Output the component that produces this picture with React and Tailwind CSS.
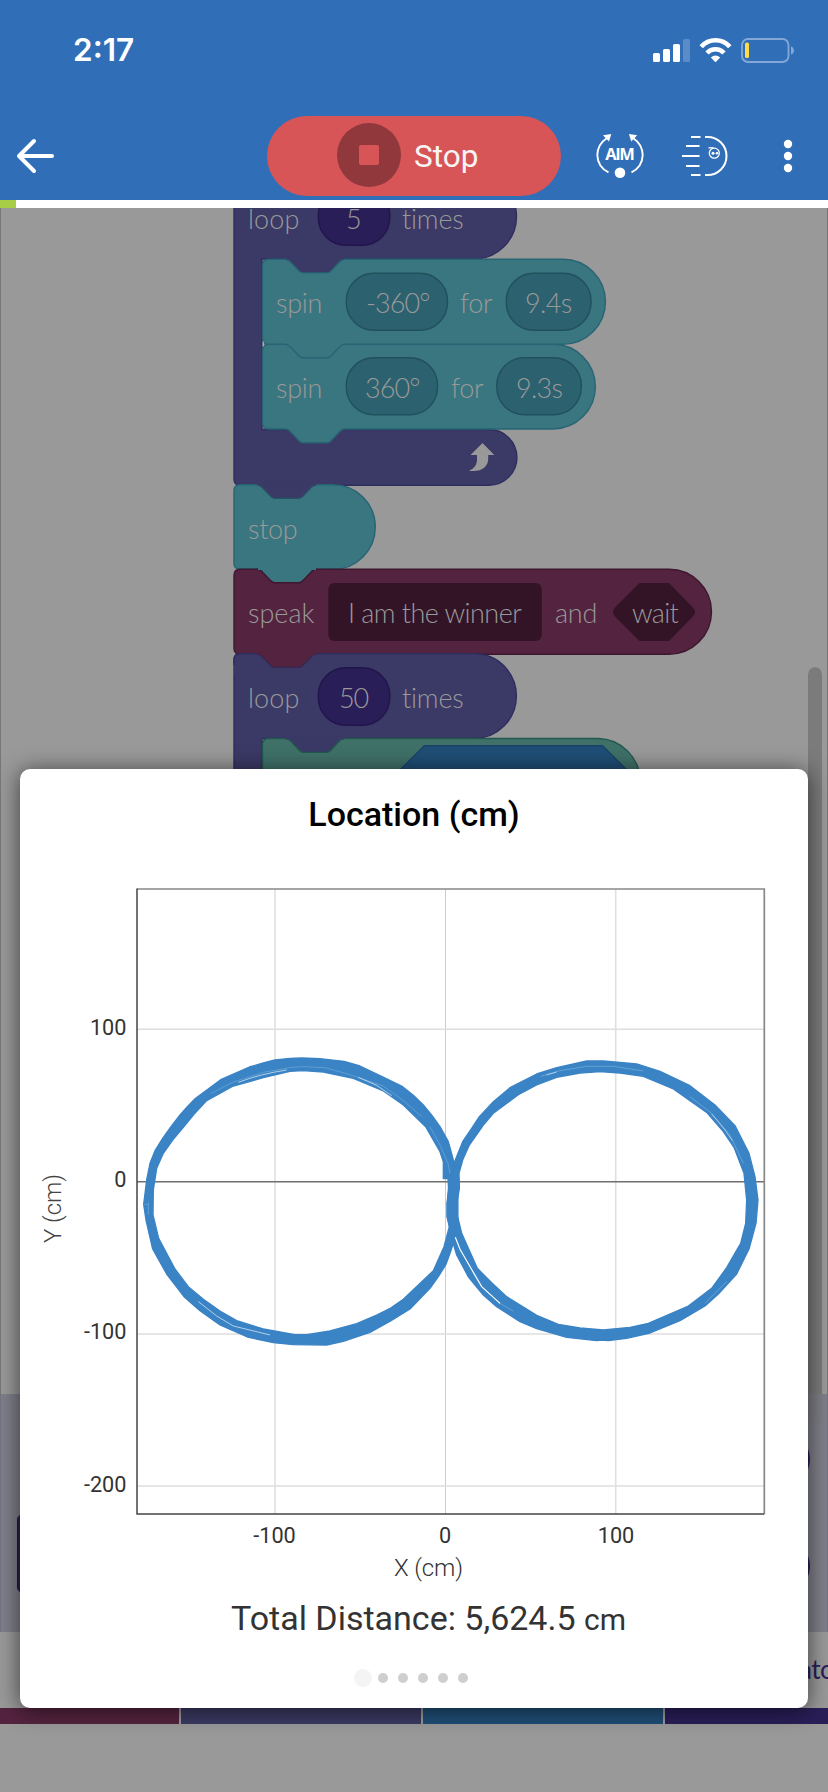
import React from "react";

const MENU_DOTS = [144, 156, 168];
const PAGE_DOTS = [1, 2, 3, 4, 5];

function StatusIcons() {
  return (
    <svg className="h-[26px] w-[142px]" viewBox="652 36 142 26" fill="none">
      <rect x="653" y="52" width="7" height="9" rx="1.6" fill="#fff" />
      <rect x="663" y="48" width="7" height="13" rx="1.6" fill="#fff" />
      <rect x="673" y="43" width="7" height="18" rx="1.6" fill="#fff" />
      <rect x="683" y="38" width="7" height="23" rx="1.6" fill="#5a8dc8" />
      <path d="M701.2 45.8a19 19 0 0 1 28.6 0" stroke="#fff" strokeWidth="4.6" />
      <path d="M707 52a11.5 11.5 0 0 1 17 0" stroke="#fff" strokeWidth="4.4" />
      <path d="M710.8 56.6Q715.500 52.600 720.2 56.600L715.500 61.200Z" fill="#fff" />
      <rect x="742" y="38" width="46.500" height="23" rx="6" stroke="#83a8d6" strokeWidth="1.8" />
      <rect x="745" y="41.500" width="4" height="15.600" rx="1.600" fill="#fbdc48" />
      <path d="M791 45.500a4.200 4.200 0 0 1 0 8z" fill="#83a8d6" />
    </svg>
  );
}

function AimIcon() {
  return (
    <svg className="h-[48px] w-[52px]" viewBox="594 132 52 48" fill="none">
      <path d="M608.500 172.300A20 20 0 0 1 597.300 155A21 21 0 0 1 606.700 138.300M631.500 172.300A20 20 0 0 0 642.700 155A21 21 0 0 0 633.300 138.300" stroke="#fff" strokeWidth="1.900" />
      <path d="M603 135.200L611.300 134L609 141.600ZM637.200 135.200L628.900 134L631.200 141.600Z" fill="#fff" />
      <circle cx="620" cy="172.800" r="5.300" fill="#fff" />
      <text x="620" y="160" textAnchor="middle" textLength="29.500" className="fill-white font-['Open_Sans'] text-[16.500px] font-bold">AIM</text>
    </svg>
  );
}

function DriveIcon() {
  return (
    <svg className="h-[44px] w-[48px]" viewBox="681 134 48 44" fill="none" stroke="#fff" strokeWidth="2">
      <path d="M691 137h9.500M686 146h13.500M682 156h17.500M686 166h13.500M691 175h9.500M705 137h2.500a19 19 0 0 1 0 38h-2.500" />
      <circle cx="714.300" cy="153.200" r="5" strokeWidth="1.300" />
      <path d="M708.500 147.800h5" strokeWidth="1.300" />
      <circle cx="713" cy="153.200" r="1.500" fill="#fff" stroke="none" />
      <circle cx="717" cy="153.200" r="1.300" fill="#fff" stroke="none" />
    </svg>
  );
}

function Header() {
  return (
    <header className="h-[200px] w-full shrink-0 bg-[#316eb8]">
      <div className="flex h-[100px] items-center justify-between pr-[34px] pl-[73px]">
        <span className="font-['Inter'] text-[31.500px] font-semibold leading-none text-white">2:17</span>
        <StatusIcons />
      </div>
      <div className="flex h-[100px] items-start">
        <svg className="mt-[36px] ml-[15px] h-[40px] w-[42px]" viewBox="15 136 42 40" fill="none" stroke="#fff" strokeWidth="4" strokeLinecap="round" strokeLinejoin="round">
          <path d="M52 156H19M34 141L19 156L34 171" />
        </svg>
        <button className="mt-[16px] ml-[210px] flex h-[80px] w-[294px] items-center rounded-full bg-[#d75557] pl-[70px]">
          <span className="mr-[13px] flex h-16 w-16 -translate-y-px items-center justify-center rounded-full bg-[#91383d]">
            <span className="h-5 w-5 rounded-[2px] bg-[#d75557]" />
          </span>
          <span className="pt-[2px] font-['Roboto'] text-[31.500px] leading-none text-[#f7f4f4]">Stop</span>
        </button>
        <div className="mt-[32px] ml-[33px]"><AimIcon /></div>
        <div className="mt-[34px] ml-[35px]"><DriveIcon /></div>
        <svg className="mt-[36px] ml-[54px] h-[40px] w-[10px]" viewBox="783 136 10 40" fill="#fff">
          {MENU_DOTS.map((y) => <circle key={y} cx="788" cy={y} r="4.200" />)}
        </svg>
      </div>
    </header>
  );
}

function Words({ className, children }) {
  return <span className={"absolute whitespace-nowrap font-['Lato'] text-[27px] font-light leading-[32px] text-[#999] " + className}>{children}</span>;
}

function Program() {
  return (
    <>
      <svg className="absolute top-0 left-0 h-[562px] w-[828px]" viewBox="0 208 828 562" strokeWidth="1.400">
        <g fill="#3b3966" stroke="#2f2d5e">
          <path d="M234 180V479Q234 485.300 240 485.300H489A27.800 27.800 0 0 0 489 429.500H262V259H474A42.500 42.500 0 0 0 474 174H234Z" />
          <path d="M234 800V660Q234 653.700 240 653.700H474A42.400 42.400 0 0 1 474 738.500H262V800Z" />
        </g>
        <g fill="#3a7680" stroke="#276474">
          <path d="M262.500 350.500Q262.500 344.300 268.500 344.300H553A42.300 42.300 0 0 1 553 429H344.500C341.500 429 340 431 338.500 432.800L332 439.800C330.500 441.500 329.500 442.700 327 442.700H303C300.500 442.700 299.500 441.500 298 439.800L291.500 432.800C290 431 288.500 429 285.500 429H268.500Q262.500 429 262.500 423Z" />
          <path d="M262.500 265.500Q262.500 259.300 268.500 259.300H563A42.300 42.300 0 0 1 563 344.300H344.500C341.500 344.300 340 346.300 338.500 348L332 355C330.500 356.700 329.500 357.700 327 357.700H303C300.500 357.700 299.500 356.700 298 355L291.500 348C290 346.300 288.500 344.300 285.500 344.300H268.500Q262.500 344.300 262.500 338.500Z" />
          <path d="M234 490.700Q234 484.700 240 484.700H333A42.200 42.200 0 0 1 333 569.300H240Q234 569.300 234 563.300Z" />
        </g>
        <path d="M234 575.500Q234 569.300 240 569.300H669A42.500 42.500 0 0 1 669 654.300H240Q234 654.300 234 648.300Z" fill="#54233f" stroke="#3f1730" />
        <path d="M234 665V660Q234 653.700 240 653.700H474A42.400 42.400 0 0 1 505 667V675H234Z" fill="#3b3966" />
        <path d="M234 665V660Q234 653.700 240 653.700H474A42.400 42.400 0 0 1 505 667" fill="none" stroke="#2f2d5e" />
        <g>
          <path d="M262.500 790V744.700Q262.500 738.500 268.500 738.500H598A42.500 42.500 0 0 1 640 781V790Z" fill="#3f7169" stroke="#23584f" />
          <path d="M390 780L424.300 745.700H602.500L637 780Z" fill="#1f4e76" stroke="#1b4268" />
        </g>
        <path d="M285.500 259.300C288.500 259.300 290 261.300 291.500 263L298 270C299.500 271.700 300.500 272.900 303 272.900H327C329.500 272.900 330.500 271.700 332 270L338.500 263C340 261.300 341.500 259.300 344.500 259.300" fill="#3b3966" stroke="#276474" />
        <path d="M286 258.400H344" stroke="#3b3966" strokeWidth="2" />
        <path d="M257 484.700C260 484.700 261.500 486.500 263 488.200L269.500 495C271 496.700 272 498.200 274.500 498.200H299C301.500 498.200 302.500 496.700 304 495L310.500 488.200C312 486.500 313.500 484.700 316.500 484.700" fill="#3b3966" stroke="#2b5063" />
        <path d="M258 484.400H316" stroke="#3b3966" strokeWidth="2.400" />
        <path d="M257 569.300C260 569.300 261.500 571 263 572.800L269.500 579.500C271 581.200 272 582.700 274.500 582.700H299C301.500 582.700 302.500 581.200 304 579.500L310.500 572.800C312 571 313.500 569.300 316.500 569.300" fill="#3a7680" stroke="#3f1730" />
        <path d="M258 568.800H316" stroke="#3a7680" strokeWidth="2.400" />
        <path d="M257 654C260 654 261.500 655.700 263 657.500L269.500 664.200C271 665.900 272 667.400 274.500 667.400H299C301.500 667.400 302.500 665.900 304 664.200L310.500 657.500C312 655.700 313.500 654 316.500 654" fill="#54233f" stroke="#37294f" />
        <path d="M258 653.600H316" stroke="#54233f" strokeWidth="2.400" />
        <path d="M285.500 738.500C288.500 738.500 290 740.300 291.500 742L298 749C299.500 750.700 300.500 752.400 303 752.400H327C329.500 752.400 330.500 750.700 332 749L338.500 742C340 740.300 341.500 738.500 344.500 738.500" fill="#3b3966" stroke="#23584f" />
        <path d="M286 738H344" stroke="#3b3966" strokeWidth="2.400" />
        <g fill="#2c616f" stroke="#21505d">
          <rect x="346.300" y="273.300" width="101.200" height="57" rx="27.500" />
          <rect x="506.300" y="273.300" width="84.700" height="57" rx="27.500" />
          <rect x="346.300" y="357.800" width="91.200" height="57" rx="27.500" />
          <rect x="496.800" y="357.800" width="84.500" height="57" rx="27.500" />
        </g>
        <g fill="#291e57" stroke="#20164b">
          <rect x="318.300" y="188" width="71.500" height="57.300" rx="27.500" />
          <rect x="318.300" y="667.800" width="71.500" height="57.500" rx="27.500" />
        </g>
        <rect x="328.300" y="583" width="213.500" height="58" rx="6" fill="#331427" />
        <path d="M639.500 583H669L693 607.500Q697 612 693 616.500L669 641H639.500L615 616.500Q611 612 615 607.500Z" fill="#331427" />
        <path d="M482.500 443L494.300 455H488.200V459C488.200 467 481 472.500 469 470.700C474.500 468.500 477 465 477 459V455H470.500Z" fill="#999" />
        <path d="M263.200 341.500v5" stroke="#b5b5b5" strokeWidth="1.200" />
      </svg>
      <Words className="top-[-5px] left-[248px] tracking-[0.100px]">loop</Words>
      <Words className="top-[-5px] left-[346px]">5</Words>
      <Words className="top-[-5px] left-[402px] tracking-[-0.200px]">times</Words>
      <Words className="top-[79px] left-[276px] tracking-[-0.300px]">spin</Words>
      <Words className="top-[79px] left-[366px] tracking-[-0.900px]">-360°</Words>
      <Words className="top-[79px] left-[460px] tracking-[-0.300px]">for</Words>
      <Words className="top-[79px] left-[525px] tracking-[-0.600px]">9.4s</Words>
      <Words className="top-[164px] left-[276px] tracking-[-0.300px]">spin</Words>
      <Words className="top-[164px] left-[365px] tracking-[-0.900px]">360°</Words>
      <Words className="top-[164px] left-[451px] tracking-[-0.300px]">for</Words>
      <Words className="top-[164px] left-[516px] tracking-[-0.700px]">9.3s</Words>
      <Words className="top-[305px] left-[248px] tracking-[-0.300px]">stop</Words>
      <Words className="top-[389px] left-[248px]">speak</Words>
      <Words className="top-[389px] left-[348px] tracking-[-0.550px]">I am the winner</Words>
      <Words className="top-[389px] left-[555px] tracking-[-0.200px]">and</Words>
      <Words className="top-[389px] left-[632px] tracking-[-0.700px]">wait</Words>
      <Words className="top-[474px] left-[248px] tracking-[0.100px]">loop</Words>
      <Words className="top-[474px] left-[339px] tracking-[-1.200px]">50</Words>
      <Words className="top-[474px] left-[402px] tracking-[-0.200px]">times</Words>
    </>
  );
}

function LocationChart() {
  return (
    <svg className="h-[730px] w-[788px] shrink-0" viewBox="20 869 788 730" fill="none">
      <path d="M275 889V1514M615.700 889V1514" stroke="#e0e0e0" strokeWidth="1.600" />
      <path d="M445.500 889V1514" stroke="#ccc" />
      <path d="M137 1029.300H764M137 1334H764M137 1486H764" stroke="#dedede" strokeWidth="1.600" />
      <path d="M137 1181.800H764" stroke="#6e6e6e" strokeWidth="1.600" />
      <path d="M137 889H764.300V1514" stroke="#888" strokeWidth="1.700" />
      <path d="M137 888.500V1514H764.300" stroke="#444" strokeWidth="1.500" />
      <g transform="translate(120 1030) scale(.333333)">
        <path fill="#3a83c5" stroke="#3a83c5" strokeWidth="4" strokeLinejoin="round" fillRule="evenodd" d="M510 85L545 84L600 86L672 94L720 108L780 137L845 168L880 196L910 225L937 258L960 290L985 335L1000 390L1015 440L1018 472L1013 510L1013 560L1018 600L1000 640L990 670L978 703L955 740L930 775L870 837L812 873L750 907L670 934L620 945L520 944L460 938L382 921L300 885L240 842L192 800L140 732L98 657L78 570L71 523L80 450L90 400L106 360L128 325L153 290L180 255L202 230L225 206L302 149L388 111L430 99L465 90ZM510 124L430 143L340 168L260 212L222 253L190 292L158 330L130 370L110 415L100 480L99 555L116 625L165 717L205 770L250 808L300 843L350 872L430 897L525 914L560 914L630 903L710 881L770 855L812 834L850 808L940 722L972 650L988 590L981 560L981 520L986 480L984 446H970V395L960 365L917 290L850 225L790 183L700 145L610 126L550 122Z" />
        <g stroke="#82b8dc" strokeWidth="1.500">
          <path d="M272 191L340 156L430 127L515 112L550 110L615 113L690 134L790 168L850 212L905 260M930 290L960 345L984 400L990 430M85 515V555M72 523H84M983 515H990" />
          <path d="M355 157Q420 132 500 120M715 142L770 166L815 197M235 815L290 858L340 888L450 915" stroke="#d8e9f5" strokeWidth="2.300" />
        </g>
      </g>
      <g transform="translate(430 1030) scale(.333333)">
        <path fill="#3a83c5" stroke="#3a83c5" strokeWidth="4" strokeLinejoin="round" fillRule="evenodd" d="M470 93H520L620 102L690 124L780 167L855 225L915 287L957 370L975 440L984 510L978 580L957 657L920 732L865 792L825 828L750 872L660 909L590 925L535 932L515 930L500 932L410 922L320 896L270 875L200 830L160 795L116 742L80 675L68 635L52 560V520L56 470L75 392L98 335L123 298L148 260L190 215L240 173L320 132L380 113L430 102ZM510 125L450 129L380 142L320 165L265 194L190 250L160 285L118 345L98 390L87 430L88 470L83 500V560L95 610L142 715L185 758L230 800L320 856L385 883L450 894L520 900L600 892L655 880L775 828L845 775L890 713L932 640L947 580L950 510L942 430L912 352L880 305L830 247L730 177L640 139L570 129Z" />
        <g stroke="#8dc3e3" strokeWidth="1.500">
          <path d="M332 139L390 122L470 109L550 109L640 123M780 200L845 250L900 315L940 400M205 817L250 843M825 820L890 755" />
          <path d="M845 252L885 300L907 332M350 135L380 126" stroke="#e4f0f8" strokeWidth="1.800" />
          <path d="M76 622L90 658L130 727L155 770L210 820" stroke="#fff" strokeWidth="3.500" />
        </g>
      </g>
      <g className="fill-[#333] font-['Roboto'] text-[21.700px]">
        <text x="126.500" y="1034.800" textAnchor="end">100</text>
        <text x="126.500" y="1187" textAnchor="end">0</text>
        <text x="126.500" y="1339.300" textAnchor="end">-100</text>
        <text x="126.500" y="1491.800" textAnchor="end">-200</text>
        <text x="274.500" y="1542.700" textAnchor="middle">-100</text>
        <text x="445" y="1542.700" textAnchor="middle">0</text>
        <text x="616" y="1542.700" textAnchor="middle">100</text>
      </g>
      <text x="428.500" y="1575.500" textAnchor="middle" textLength="69" className="fill-[#333] font-['Roboto'] text-[24px] font-light">X (cm)</text>
      <text transform="translate(61.300 1208.500) rotate(-90)" textAnchor="middle" textLength="69" className="fill-[#444] font-['Roboto'] text-[24px] font-light">Y (cm)</text>
    </svg>
  );
}

export default function App() {
  return (
    <div className="relative flex h-[1792px] w-[828px] flex-col overflow-hidden bg-[#999]">
      <Header />
      <div className="h-2 shrink-0 bg-white"><div className="h-2 w-4 bg-[#a7cc45]" /></div>
      <main className="relative h-[1186px] shrink-0 overflow-hidden border-x border-[#777]">
        <div className="absolute inset-y-0 -left-px w-[828px]"><Program /></div>
      </main>
      <div className="relative h-[238px] shrink-0 border-x border-[#747480] bg-[#7f7f8a]">
        <div className="absolute top-[120px] left-[16px] h-[79px] w-8 rounded-[6px] border border-[#20164b] bg-[#292456]" />
        <div className="absolute top-[36px] right-[17px] h-[58px] w-[70px] rounded-full bg-[#291e57]" />
        <div className="absolute top-[143px] right-[17px] h-[58px] w-[70px] rounded-full bg-[#291e57]" />
      </div>
      <div className="flex h-[76px] shrink-0 items-center justify-end overflow-hidden pb-[2px]">
        <span className="-mr-[26px] font-['Lato'] text-[26px] font-normal leading-[34px] tracking-[-0.500px] text-[#291e57]">Operators</span>
      </div>
      <div className="grid h-4 shrink-0 grid-cols-[179px_240px_240px_163px] gap-[2px]">
        <div className="bg-[#54233f]" />
        <div className="bg-[#3a3962]" />
        <div className="bg-[#1f4e76]" />
        <div className="bg-[#291e57]" />
      </div>
      <div className="absolute top-[667px] left-[808px] h-[758px] w-[14px] rounded-[7px] bg-[#7b7b7b] [mask-image:linear-gradient(#000_0_727px,#0005_727px)]" />
      <section className="absolute top-[769px] left-[20px] flex h-[939px] w-[788px] flex-col rounded-[10px] bg-white shadow-[0_2px_22px_rgba(0,0,0,0.600)]">
        <h1 className="h-[100px] shrink-0 pt-[26px] text-center font-['Roboto'] text-[34px] font-medium leading-[38px] text-black">Location (cm)</h1>
        <LocationChart />
        <p className="-mt-[3px] pl-[29px] text-center font-['Roboto'] text-[34px] leading-[44px] text-[#333]">
          Total Distance: 5,624.5 <span className="text-[30px]">cm</span>
        </p>
        <div className="mt-[27px] flex h-[18px] items-center pl-[334px]">
          <span className="mr-[6px] h-[18px] w-[18px] rounded-full bg-[#f4f4f4]" />
          <div className="flex gap-[10px]">
            {PAGE_DOTS.map((n) => <span key={n} className="h-[10px] w-[10px] rounded-full bg-[#cfcfcf]" />)}
          </div>
        </div>
      </section>
    </div>
  );
}
